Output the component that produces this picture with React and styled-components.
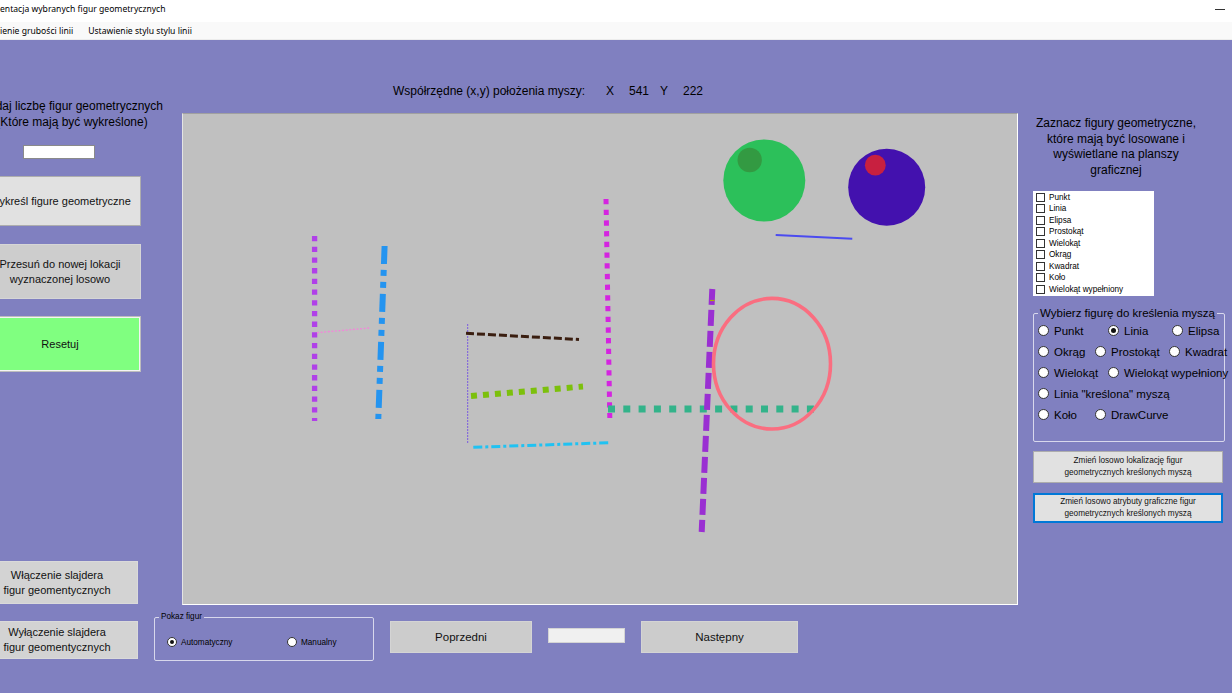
import React from 'react';
import styled, { createGlobalStyle } from 'styled-components';

const Global = createGlobalStyle`
  html, body { margin: 0; padding: 0; width: 1232px; height: 693px; overflow: hidden; background: #8080c0; }
  #root { width: 1232px; height: 693px; }
  * { box-sizing: border-box; }
`;

const Window = styled.div`
  width: 1232px;
  height: 693px;
  display: flex;
  flex-direction: column;
  overflow: hidden;
  font-family: "Liberation Sans", Arial, sans-serif;
  color: #000;
`;

const TitleBar = styled.div`
  height: 22px;
  flex: none;
  background: #fff;
  display: flex;
  align-items: flex-start;
  justify-content: space-between;
  font-family: "Noto Sans", sans-serif;
  font-size: 8.6px;
`;

const TitleText = styled.span`
  margin-top: 3px;
  line-height: 12px;
  white-space: nowrap;
`;

const MinimizeGlyph = styled.span`
  width: 10px;
  height: 1px;
  margin: 9px 7px 0 0;
  background: #333;
`;

const MenuBar = styled.div`
  height: 18px;
  flex: none;
  background: #f9f9f9;
  border-bottom: 1px solid #ececec;
  display: flex;
  align-items: center;
  gap: 15px;
  font-family: "Noto Sans", sans-serif;
  font-size: 8.6px;
`;

const MenuItem = styled.span`
  white-space: nowrap;
  line-height: 12px;
`;

const Main = styled.div`
  flex: 1;
  display: flex;
  align-items: flex-start;
  background: #8080c0;
`;

/* ---------- left column ---------- */
const LeftColumn = styled.div`
  margin-left: -21px;
  width: 163px;
  flex: none;
  display: flex;
  flex-direction: column;
  padding-top: 58px;
`;

const CountLabel = styled.div`
  width: 220px;
  margin-left: -17px;
  text-align: center;
  font-size: 12px;
  line-height: 16px;
  white-space: nowrap;
`;

const TextBox = styled.div`
  width: ${p => p.$w}px;
  height: ${p => p.$h}px;
  margin-top: ${p => p.$mt || 0}px;
  margin-left: ${p => p.$ml || 0}px;
  background: ${p => p.$bg || '#fff'};
  border: 1px solid ${p => p.$border || '#8a8a8a'};
  flex: none;
`;

const WinButton = styled.button`
  flex: none;
  width: ${p => p.$w}px;
  height: ${p => p.$h}px;
  margin-top: ${p => p.$mt || 0}px;
  margin-left: ${p => p.$ml || 0}px;
  background: ${p => p.$bg || '#e1e1e1'};
  border: ${p => p.$bw || 1}px solid ${p => p.$border || '#adadad'};
  box-shadow: ${p => p.$inset ? 'inset 0 0 0 1px #f4f4f4' : 'none'};
  font-family: "Liberation Sans", Arial, sans-serif;
  font-size: ${p => p.$fs || 11}px;
  line-height: ${p => p.$lh || 15}px;
  color: #111;
  padding: 0;
  text-align: center;
  white-space: nowrap;
  display: flex;
  flex-direction: column;
  align-items: center;
  justify-content: center;
`;

/* ---------- center column ---------- */
const CenterColumn = styled.div`
  margin-left: 12px;
  width: 864px;
  flex: none;
  display: flex;
  flex-direction: column;
  padding-top: 44px;
`;

const CoordRow = styled.div`
  padding-left: 239px;
  display: grid;
  grid-template-columns: 213px 23px 31px 23px auto;
  font-size: 12px;
  line-height: 14px;
  white-space: nowrap;
`;

const Canvas = styled.div`
  margin-top: 15px;
  margin-left: 28px;
  width: 836px;
  height: 492px;
  background: #c0c0c0;
  border-top: 1px solid #a0a0a0;
  border-left: 1px solid #e4e4e4;
  border-right: 1px solid #fff;
  border-bottom: 1px solid #fff;
  & > svg { display: block; }
`;

const BottomRow = styled.div`
  margin-top: 7px;
  display: flex;
  align-items: flex-start;
`;

const GroupBox = styled.fieldset`
  margin: ${p => p.$mt || 0}px 0 0 0;
  padding: ${p => p.$pad};
  width: ${p => p.$w}px;
  height: ${p => p.$h}px;
  border: 1px solid #d8d8ec;
  border-radius: 2px;
  flex: none;
  min-width: 0;
`;

const Legend = styled.legend`
  margin-left: ${p => p.$ml}px;
  padding: 0 2px;
  font-size: ${p => p.$fs}px;
  line-height: ${p => p.$lh}px;
  white-space: nowrap;
`;

const RadioRow = styled.div`
  display: flex;
  align-items: center;
  height: ${p => p.$h}px;
  margin-top: ${p => p.$mt || 0}px;
`;

const RadioItem = styled.label`
  display: flex;
  align-items: center;
  gap: ${p => p.$gap}px;
  width: ${p => (p.$w ? `${p.$w}px` : 'auto')};
  flex: none;
  font-size: ${p => p.$fs}px;
  white-space: nowrap;
`;

const RadioCircle = styled.span`
  width: ${p => p.$size}px;
  height: ${p => p.$size}px;
  border-radius: 50%;
  border: 1px solid #333;
  background: #fff;
  display: flex;
  align-items: center;
  justify-content: center;
  flex: none;
`;

const RadioDot = styled.span`
  width: ${p => p.$size}px;
  height: ${p => p.$size}px;
  border-radius: 50%;
  background: #111;
`;

/* ---------- right column ---------- */
const RightColumn = styled.div`
  margin-left: 15px;
  width: 192px;
  flex: none;
  display: flex;
  flex-direction: column;
  padding-top: 76px;
`;

const RightLabel = styled.div`
  width: 166px;
  text-align: center;
  font-size: 12px;
  line-height: 15.5px;
  white-space: nowrap;
`;

const CheckList = styled.div`
  margin-top: 13px;
  width: 121px;
  height: 105px;
  background: #fff;
  padding: 0.5px 0 0 3px;
  display: flex;
  flex-direction: column;
`;

const CheckRow = styled.div`
  height: 11.5px;
  display: flex;
  align-items: center;
  gap: 4px;
  font-size: 8.2px;
  white-space: nowrap;
`;

const CheckBox = styled.span`
  width: 9px;
  height: 9px;
  border: 1px solid #333;
  background: #fff;
  flex: none;
`;

const Radio = ({ label, checked, w, size = 11, dot = 5, gap = 5, fs = 11.5 }) => (
  <RadioItem $w={w} $gap={gap} $fs={fs}>
    <RadioCircle $size={size}>{checked && <RadioDot $size={dot} />}</RadioCircle>
    {label}
  </RadioItem>
);

const checkItems = ['Punkt', 'Linia', 'Elipsa', 'Prostokąt', 'Wielokąt', 'Okrąg', 'Kwadrat', 'Koło', 'Wielokąt wypełniony'];

const Drawing = () => (
  <svg width="834" height="490" viewBox="183 114 834 490">
    {/* H left */}
    <line x1="314.6" y1="236" x2="314.6" y2="421" stroke="#b040e8" strokeWidth="5.3" strokeDasharray="5.3 5.4" />
    <line x1="317" y1="332.7" x2="369.5" y2="328" stroke="#f088d8" strokeWidth="1.4" strokeDasharray="2 1.6" />
    {/* H right */}
    <line x1="384.6" y1="246" x2="378.3" y2="419" stroke="#2494f0" strokeWidth="6" strokeDasharray="18 6 6 6 6 6" />
    {/* E */}
    <line x1="467.7" y1="324" x2="467.7" y2="443" stroke="#7a5ae0" strokeWidth="1" strokeDasharray="2 1" />
    <line x1="466" y1="333.3" x2="579" y2="339.5" stroke="#3a1e10" strokeWidth="3" strokeDasharray="8 3" />
    <line x1="471" y1="396" x2="583" y2="386.5" stroke="#7cc00c" strokeWidth="6" strokeDasharray="6 6" />
    <line x1="473.3" y1="447.3" x2="610" y2="442.7" stroke="#20c2f2" strokeWidth="3" strokeDasharray="9 3 3 3" />
    {/* L */}
    <line x1="606" y1="199" x2="609.8" y2="418" stroke="#d424e0" strokeWidth="5" strokeDasharray="5.3 5.4" />
    <line x1="608" y1="409" x2="814" y2="409" stroke="#33b38a" strokeWidth="7" strokeDasharray="7 8.3" />
    {/* P */}
    <line x1="712.3" y1="289" x2="701.7" y2="532" stroke="#9a2fd2" strokeWidth="6" strokeDasharray="16 5" />
    <line x1="710" y1="300.5" x2="714.5" y2="300.5" stroke="#a8b000" strokeWidth="1.2" />
    <ellipse cx="772" cy="363.7" rx="58.5" ry="65.3" fill="none" stroke="#fa6e80" strokeWidth="3.6" />
    {/* circles */}
    <circle cx="764.3" cy="180.5" r="41" fill="#2cc05a" />
    <circle cx="749.7" cy="160" r="12.2" fill="#339a42" />
    <circle cx="886.7" cy="187.2" r="38.5" fill="#4311ae" />
    <circle cx="875.3" cy="165.2" r="10.4" fill="#c82040" />
    <line x1="775.7" y1="235" x2="852.3" y2="238.7" stroke="#4b4bf0" strokeWidth="2" />
  </svg>
);

export default function App() {
  return (
    <>
      <Global />
      <Window>
        <TitleBar>
          <TitleText>entacja wybranych figur geometrycznych</TitleText>
          <MinimizeGlyph />
        </TitleBar>
        <MenuBar>
          <MenuItem>ienie grubości linii</MenuItem>
          <MenuItem>Ustawienie stylu stylu linii</MenuItem>
        </MenuBar>
        <Main>
          <LeftColumn>
            <CountLabel>
              Podaj liczbę figur geometrycznych
              <br />
              (Które mają być wykreślone)
            </CountLabel>
            <TextBox $w={72} $h={14} $mt={15} $ml={44} />
            <WinButton $w={162} $h={50} $mt={17}>Wykreśl figure geometryczne</WinButton>
            <WinButton $w={162} $h={55} $mt={18} $bg="#cdcdcd" $border="#d6d6d6">
              <span>Przesuń do nowej lokacji</span>
              <span>wyznaczonej losowo</span>
            </WinButton>
            <WinButton $w={162} $h={56} $mt={17} $bg="#80ff80" $border="#bdbdbd" $inset>Resetuj</WinButton>
            <WinButton $w={162} $h={43} $mt={189} $ml={-3} $bg="#d3d3d3" $border="#dadada">
              <span>Włączenie slajdera</span>
              <span>figur geomentycznych</span>
            </WinButton>
            <WinButton $w={162} $h={38} $mt={17} $ml={-3} $bg="#d3d3d3" $border="#dadada">
              <span>Wyłączenie slajdera</span>
              <span>figur geomentycznych</span>
            </WinButton>
          </LeftColumn>

          <CenterColumn>
            <CoordRow>
              <span>Współrzędne (x,y) położenia myszy:</span>
              <span>X</span>
              <span>541</span>
              <span>Y</span>
              <span>222</span>
            </CoordRow>
            <Canvas>
              <Drawing />
            </Canvas>
            <BottomRow>
              <GroupBox $w={220} $h={49} $pad="0 0 0 12px">
                <Legend $ml={-8} $fs={8.2} $lh={10}>Pokaz figur</Legend>
                <RadioRow $h={11} $mt={14.5}>
                  <Radio label="Automatyczny" checked w={120} size={10} dot={4} gap={4} fs={8.2} />
                  <Radio label="Manualny" size={10} dot={4} gap={4} fs={8.2} />
                </RadioRow>
              </GroupBox>
              <WinButton $w={142} $h={32} $mt={9} $ml={16} $bg="#cccccc" $border="#d4d4d4" $fs={11.5}>Poprzedni</WinButton>
              <TextBox $w={77} $h={15} $mt={16} $ml={16} $bg="#f0f0f0" $border="#d4d4d4" />
              <WinButton $w={157} $h={32} $mt={9} $ml={16} $bg="#cccccc" $border="#d4d4d4" $fs={11.5}>Następny</WinButton>
            </BottomRow>
          </CenterColumn>

          <RightColumn>
            <RightLabel>
              Zaznacz figury geometryczne,
              <br />
              które mają być losowane i
              <br />
              wyświetlane na planszy
              <br />
              graficznej
            </RightLabel>
            <CheckList>
              {checkItems.map(item => (
                <CheckRow key={item}>
                  <CheckBox />
                  {item}
                </CheckRow>
              ))}
            </CheckList>
            <GroupBox $mt={10} $w={192} $h={136} $pad="0 0 0 4px">
              <Legend $ml={0} $fs={11.5} $lh={14}>Wybierz figurę do kreślenia myszą</Legend>
              <RadioRow $h={21}>
                <Radio label="Punkt" w={70} />
                <Radio label="Linia" w={64} checked />
                <Radio label="Elipsa" />
              </RadioRow>
              <RadioRow $h={21}>
                <Radio label="Okrąg" w={57} />
                <Radio label="Prostokąt" w={74} />
                <Radio label="Kwadrat" />
              </RadioRow>
              <RadioRow $h={21}>
                <Radio label="Wielokąt" w={70} />
                <Radio label="Wielokąt wypełniony" />
              </RadioRow>
              <RadioRow $h={21}>
                <Radio label={'Linia "kreślona" myszą'} />
              </RadioRow>
              <RadioRow $h={21}>
                <Radio label="Koło" w={57} />
                <Radio label="DrawCurve" />
              </RadioRow>
            </GroupBox>
            <WinButton $w={190} $h={32} $mt={9} $fs={8.2} $lh={12}>
              <span>Zmień losowo lokalizację figur</span>
              <span>geometrycznych kreślonych myszą</span>
            </WinButton>
            <WinButton $w={190} $h={30} $mt={10} $fs={8.2} $lh={12} $bw={2} $border="#0078d7">
              <span>Zmień losowo atrybuty graficzne figur</span>
              <span>geometrycznych kreślonych myszą</span>
            </WinButton>
          </RightColumn>
        </Main>
      </Window>
    </>
  );
}
